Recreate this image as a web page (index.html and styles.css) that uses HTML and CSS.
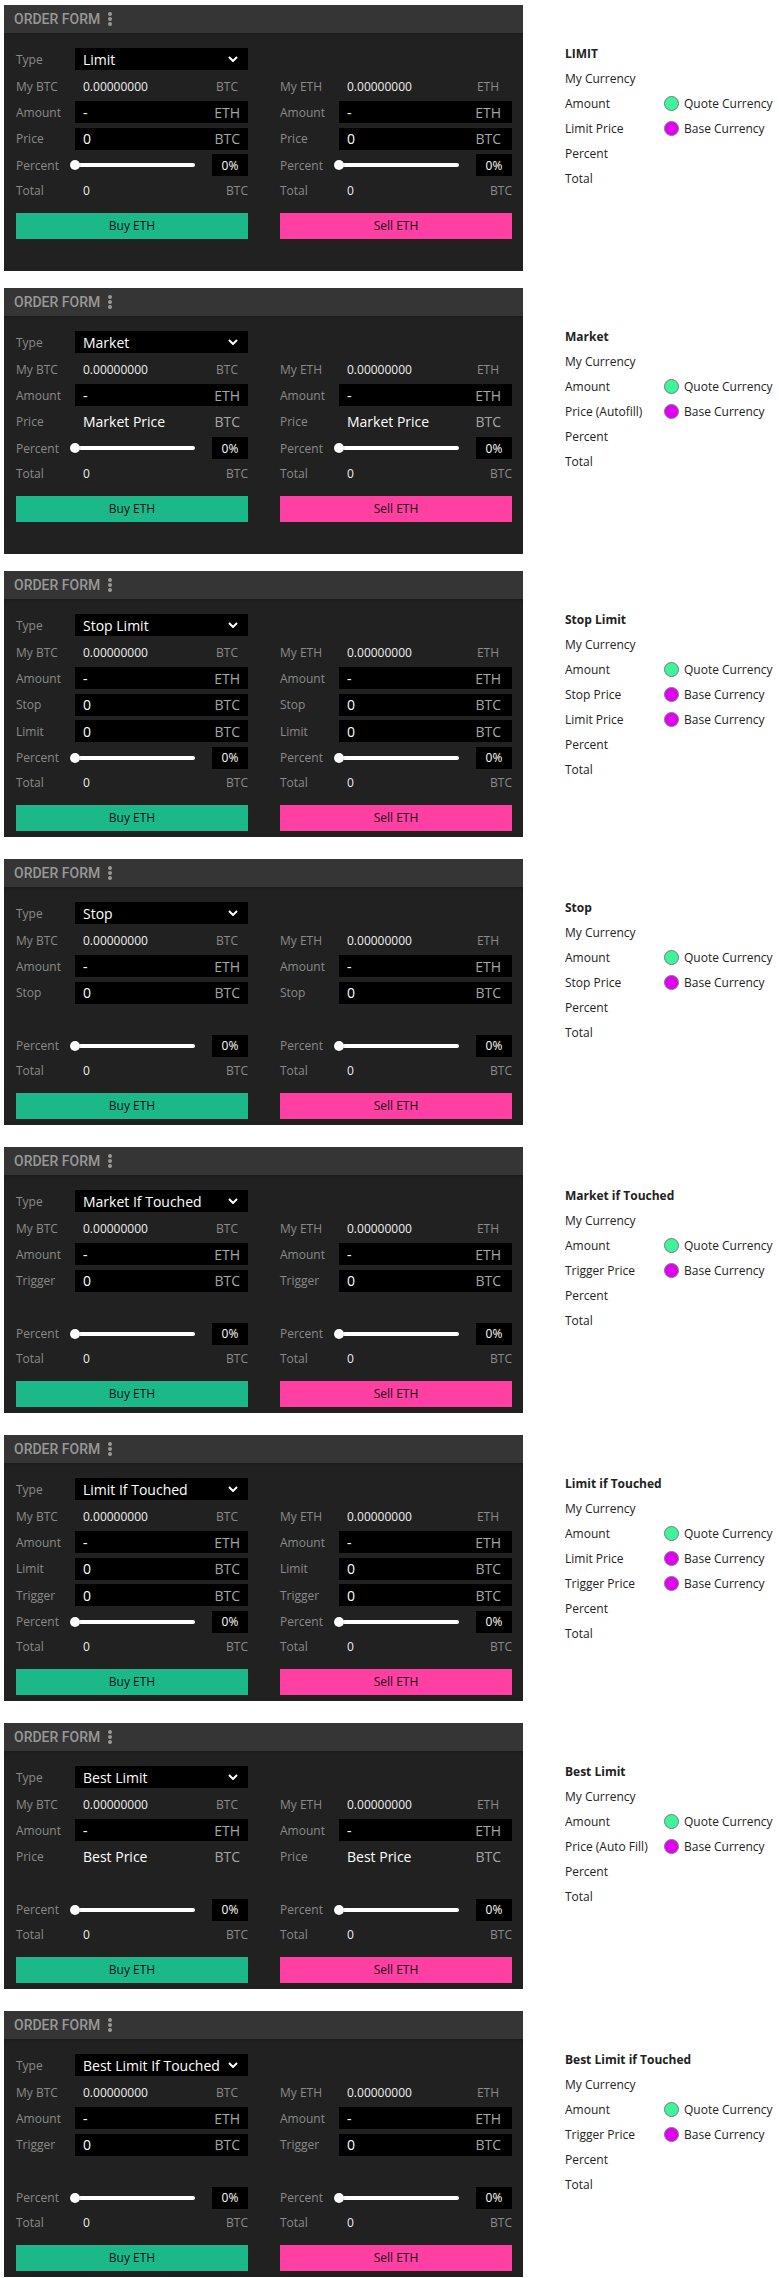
FILE: index.html
```html
<!DOCTYPE html>
<html>
  <head>
    <title>Order Types</title>
    <link rel="stylesheet" href="styles.css">
  </head>
  <body>

    <!-- Limit -->
    <section class="entry compact">
      <div class="order-form">
        <div class="of-head">
          <span class="of-title">ORDER FORM</span>
          <svg class="kebab" width="4" height="14" viewBox="0 0 4 14"><circle cx="2" cy="2" r="2"/><circle cx="2" cy="7" r="2"/><circle cx="2" cy="12" r="2"/></svg>
        </div>
        <div class="of-body">
          <div class="row type-row">
            <span class="lbl">Type</span>
            <div class="select">Limit<svg class="chev" width="10" height="6" viewBox="0 0 10 6"><polyline points="1,1 5,5 9,1"/></svg></div>
          </div>
          <div class="sides">
            <div class="side">
              <div class="row"><span class="lbl">My BTC</span><div class="val">0.00000000<span class="unit">BTC</span></div></div>
              <div class="row"><span class="lbl">Amount</span><div class="field">-<span class="unit">ETH</span></div></div>
              <div class="row"><span class="lbl">Price</span><div class="field">0<span class="unit">BTC</span></div></div>
              <div class="row"><span class="lbl">Percent</span><div class="pct"><div class="slider"><span class="thumb"></span></div><div class="pct-box">0%</div></div></div>
              <div class="row total-row"><span class="lbl">Total</span><div class="val total-val">0<span class="unit">BTC</span></div></div>
              <button class="btn buy">Buy ETH</button>
            </div>
            <div class="side ask">
              <div class="row"><span class="lbl">My ETH</span><div class="val">0.00000000<span class="unit">ETH</span></div></div>
              <div class="row"><span class="lbl">Amount</span><div class="field">-<span class="unit">ETH</span></div></div>
              <div class="row"><span class="lbl">Price</span><div class="field">0<span class="unit">BTC</span></div></div>
              <div class="row"><span class="lbl">Percent</span><div class="pct"><div class="slider"><span class="thumb"></span></div><div class="pct-box">0%</div></div></div>
              <div class="row total-row"><span class="lbl">Total</span><div class="val total-val">0<span class="unit">BTC</span></div></div>
              <button class="btn sell">Sell ETH</button>
            </div>
          </div>
        </div>
      </div>
      <div class="legend">
        <div class="lg-row lg-title">LIMIT</div>
        <div class="lg-row"><span class="lg-name">My Currency</span></div>
        <div class="lg-row"><span class="lg-name">Amount</span><span class="dot quote"></span>Quote Currency</div>
        <div class="lg-row"><span class="lg-name">Limit Price</span><span class="dot base"></span>Base Currency</div>
        <div class="lg-row"><span class="lg-name">Percent</span></div>
        <div class="lg-row"><span class="lg-name">Total</span></div>
      </div>
    </section>

    <!-- Market -->
    <section class="entry compact">
      <div class="order-form">
        <div class="of-head">
          <span class="of-title">ORDER FORM</span>
          <svg class="kebab" width="4" height="14" viewBox="0 0 4 14"><circle cx="2" cy="2" r="2"/><circle cx="2" cy="7" r="2"/><circle cx="2" cy="12" r="2"/></svg>
        </div>
        <div class="of-body">
          <div class="row type-row">
            <span class="lbl">Type</span>
            <div class="select">Market<svg class="chev" width="10" height="6" viewBox="0 0 10 6"><polyline points="1,1 5,5 9,1"/></svg></div>
          </div>
          <div class="sides">
            <div class="side">
              <div class="row"><span class="lbl">My BTC</span><div class="val">0.00000000<span class="unit">BTC</span></div></div>
              <div class="row"><span class="lbl">Amount</span><div class="field">-<span class="unit">ETH</span></div></div>
              <div class="row"><span class="lbl">Price</span><div class="plain">Market Price<span class="unit">BTC</span></div></div>
              <div class="row"><span class="lbl">Percent</span><div class="pct"><div class="slider"><span class="thumb"></span></div><div class="pct-box">0%</div></div></div>
              <div class="row total-row"><span class="lbl">Total</span><div class="val total-val">0<span class="unit">BTC</span></div></div>
              <button class="btn buy">Buy ETH</button>
            </div>
            <div class="side ask">
              <div class="row"><span class="lbl">My ETH</span><div class="val">0.00000000<span class="unit">ETH</span></div></div>
              <div class="row"><span class="lbl">Amount</span><div class="field">-<span class="unit">ETH</span></div></div>
              <div class="row"><span class="lbl">Price</span><div class="plain">Market Price<span class="unit">BTC</span></div></div>
              <div class="row"><span class="lbl">Percent</span><div class="pct"><div class="slider"><span class="thumb"></span></div><div class="pct-box">0%</div></div></div>
              <div class="row total-row"><span class="lbl">Total</span><div class="val total-val">0<span class="unit">BTC</span></div></div>
              <button class="btn sell">Sell ETH</button>
            </div>
          </div>
        </div>
      </div>
      <div class="legend">
        <div class="lg-row lg-title">Market</div>
        <div class="lg-row"><span class="lg-name">My Currency</span></div>
        <div class="lg-row"><span class="lg-name">Amount</span><span class="dot quote"></span>Quote Currency</div>
        <div class="lg-row"><span class="lg-name">Price (Autofill)</span><span class="dot base"></span>Base Currency</div>
        <div class="lg-row"><span class="lg-name">Percent</span></div>
        <div class="lg-row"><span class="lg-name">Total</span></div>
      </div>
    </section>

    <!-- Stop Limit -->
    <section class="entry">
      <div class="order-form">
        <div class="of-head">
          <span class="of-title">ORDER FORM</span>
          <svg class="kebab" width="4" height="14" viewBox="0 0 4 14"><circle cx="2" cy="2" r="2"/><circle cx="2" cy="7" r="2"/><circle cx="2" cy="12" r="2"/></svg>
        </div>
        <div class="of-body">
          <div class="row type-row">
            <span class="lbl">Type</span>
            <div class="select">Stop Limit<svg class="chev" width="10" height="6" viewBox="0 0 10 6"><polyline points="1,1 5,5 9,1"/></svg></div>
          </div>
          <div class="sides">
            <div class="side">
              <div class="row"><span class="lbl">My BTC</span><div class="val">0.00000000<span class="unit">BTC</span></div></div>
              <div class="row"><span class="lbl">Amount</span><div class="field">-<span class="unit">ETH</span></div></div>
              <div class="row"><span class="lbl">Stop</span><div class="field">0<span class="unit">BTC</span></div></div>
              <div class="row"><span class="lbl">Limit</span><div class="field">0<span class="unit">BTC</span></div></div>
              <div class="row"><span class="lbl">Percent</span><div class="pct"><div class="slider"><span class="thumb"></span></div><div class="pct-box">0%</div></div></div>
              <div class="row total-row"><span class="lbl">Total</span><div class="val total-val">0<span class="unit">BTC</span></div></div>
              <button class="btn buy">Buy ETH</button>
            </div>
            <div class="side ask">
              <div class="row"><span class="lbl">My ETH</span><div class="val">0.00000000<span class="unit">ETH</span></div></div>
              <div class="row"><span class="lbl">Amount</span><div class="field">-<span class="unit">ETH</span></div></div>
              <div class="row"><span class="lbl">Stop</span><div class="field">0<span class="unit">BTC</span></div></div>
              <div class="row"><span class="lbl">Limit</span><div class="field">0<span class="unit">BTC</span></div></div>
              <div class="row"><span class="lbl">Percent</span><div class="pct"><div class="slider"><span class="thumb"></span></div><div class="pct-box">0%</div></div></div>
              <div class="row total-row"><span class="lbl">Total</span><div class="val total-val">0<span class="unit">BTC</span></div></div>
              <button class="btn sell">Sell ETH</button>
            </div>
          </div>
        </div>
      </div>
      <div class="legend">
        <div class="lg-row lg-title">Stop Limit</div>
        <div class="lg-row"><span class="lg-name">My Currency</span></div>
        <div class="lg-row"><span class="lg-name">Amount</span><span class="dot quote"></span>Quote Currency</div>
        <div class="lg-row"><span class="lg-name">Stop Price</span><span class="dot base"></span>Base Currency</div>
        <div class="lg-row"><span class="lg-name">Limit Price</span><span class="dot base"></span>Base Currency</div>
        <div class="lg-row"><span class="lg-name">Percent</span></div>
        <div class="lg-row"><span class="lg-name">Total</span></div>
      </div>
    </section>

    <!-- Stop -->
    <section class="entry">
      <div class="order-form">
        <div class="of-head">
          <span class="of-title">ORDER FORM</span>
          <svg class="kebab" width="4" height="14" viewBox="0 0 4 14"><circle cx="2" cy="2" r="2"/><circle cx="2" cy="7" r="2"/><circle cx="2" cy="12" r="2"/></svg>
        </div>
        <div class="of-body">
          <div class="row type-row">
            <span class="lbl">Type</span>
            <div class="select">Stop<svg class="chev" width="10" height="6" viewBox="0 0 10 6"><polyline points="1,1 5,5 9,1"/></svg></div>
          </div>
          <div class="sides">
            <div class="side">
              <div class="row"><span class="lbl">My BTC</span><div class="val">0.00000000<span class="unit">BTC</span></div></div>
              <div class="row"><span class="lbl">Amount</span><div class="field">-<span class="unit">ETH</span></div></div>
              <div class="row"><span class="lbl">Stop</span><div class="field">0<span class="unit">BTC</span></div></div>
              <div class="row"></div>
              <div class="row"><span class="lbl">Percent</span><div class="pct"><div class="slider"><span class="thumb"></span></div><div class="pct-box">0%</div></div></div>
              <div class="row total-row"><span class="lbl">Total</span><div class="val total-val">0<span class="unit">BTC</span></div></div>
              <button class="btn buy">Buy ETH</button>
            </div>
            <div class="side ask">
              <div class="row"><span class="lbl">My ETH</span><div class="val">0.00000000<span class="unit">ETH</span></div></div>
              <div class="row"><span class="lbl">Amount</span><div class="field">-<span class="unit">ETH</span></div></div>
              <div class="row"><span class="lbl">Stop</span><div class="field">0<span class="unit">BTC</span></div></div>
              <div class="row"></div>
              <div class="row"><span class="lbl">Percent</span><div class="pct"><div class="slider"><span class="thumb"></span></div><div class="pct-box">0%</div></div></div>
              <div class="row total-row"><span class="lbl">Total</span><div class="val total-val">0<span class="unit">BTC</span></div></div>
              <button class="btn sell">Sell ETH</button>
            </div>
          </div>
        </div>
      </div>
      <div class="legend">
        <div class="lg-row lg-title">Stop</div>
        <div class="lg-row"><span class="lg-name">My Currency</span></div>
        <div class="lg-row"><span class="lg-name">Amount</span><span class="dot quote"></span>Quote Currency</div>
        <div class="lg-row"><span class="lg-name">Stop Price</span><span class="dot base"></span>Base Currency</div>
        <div class="lg-row"><span class="lg-name">Percent</span></div>
        <div class="lg-row"><span class="lg-name">Total</span></div>
      </div>
    </section>

    <!-- Market If Touched -->
    <section class="entry">
      <div class="order-form">
        <div class="of-head">
          <span class="of-title">ORDER FORM</span>
          <svg class="kebab" width="4" height="14" viewBox="0 0 4 14"><circle cx="2" cy="2" r="2"/><circle cx="2" cy="7" r="2"/><circle cx="2" cy="12" r="2"/></svg>
        </div>
        <div class="of-body">
          <div class="row type-row">
            <span class="lbl">Type</span>
            <div class="select">Market If Touched<svg class="chev" width="10" height="6" viewBox="0 0 10 6"><polyline points="1,1 5,5 9,1"/></svg></div>
          </div>
          <div class="sides">
            <div class="side">
              <div class="row"><span class="lbl">My BTC</span><div class="val">0.00000000<span class="unit">BTC</span></div></div>
              <div class="row"><span class="lbl">Amount</span><div class="field">-<span class="unit">ETH</span></div></div>
              <div class="row"><span class="lbl">Trigger</span><div class="field">0<span class="unit">BTC</span></div></div>
              <div class="row"></div>
              <div class="row"><span class="lbl">Percent</span><div class="pct"><div class="slider"><span class="thumb"></span></div><div class="pct-box">0%</div></div></div>
              <div class="row total-row"><span class="lbl">Total</span><div class="val total-val">0<span class="unit">BTC</span></div></div>
              <button class="btn buy">Buy ETH</button>
            </div>
            <div class="side ask">
              <div class="row"><span class="lbl">My ETH</span><div class="val">0.00000000<span class="unit">ETH</span></div></div>
              <div class="row"><span class="lbl">Amount</span><div class="field">-<span class="unit">ETH</span></div></div>
              <div class="row"><span class="lbl">Trigger</span><div class="field">0<span class="unit">BTC</span></div></div>
              <div class="row"></div>
              <div class="row"><span class="lbl">Percent</span><div class="pct"><div class="slider"><span class="thumb"></span></div><div class="pct-box">0%</div></div></div>
              <div class="row total-row"><span class="lbl">Total</span><div class="val total-val">0<span class="unit">BTC</span></div></div>
              <button class="btn sell">Sell ETH</button>
            </div>
          </div>
        </div>
      </div>
      <div class="legend">
        <div class="lg-row lg-title">Market if Touched</div>
        <div class="lg-row"><span class="lg-name">My Currency</span></div>
        <div class="lg-row"><span class="lg-name">Amount</span><span class="dot quote"></span>Quote Currency</div>
        <div class="lg-row"><span class="lg-name">Trigger Price</span><span class="dot base"></span>Base Currency</div>
        <div class="lg-row"><span class="lg-name">Percent</span></div>
        <div class="lg-row"><span class="lg-name">Total</span></div>
      </div>
    </section>

    <!-- Limit If Touched -->
    <section class="entry">
      <div class="order-form">
        <div class="of-head">
          <span class="of-title">ORDER FORM</span>
          <svg class="kebab" width="4" height="14" viewBox="0 0 4 14"><circle cx="2" cy="2" r="2"/><circle cx="2" cy="7" r="2"/><circle cx="2" cy="12" r="2"/></svg>
        </div>
        <div class="of-body">
          <div class="row type-row">
            <span class="lbl">Type</span>
            <div class="select">Limit If Touched<svg class="chev" width="10" height="6" viewBox="0 0 10 6"><polyline points="1,1 5,5 9,1"/></svg></div>
          </div>
          <div class="sides">
            <div class="side">
              <div class="row"><span class="lbl">My BTC</span><div class="val">0.00000000<span class="unit">BTC</span></div></div>
              <div class="row"><span class="lbl">Amount</span><div class="field">-<span class="unit">ETH</span></div></div>
              <div class="row"><span class="lbl">Limit</span><div class="field">0<span class="unit">BTC</span></div></div>
              <div class="row"><span class="lbl">Trigger</span><div class="field">0<span class="unit">BTC</span></div></div>
              <div class="row"><span class="lbl">Percent</span><div class="pct"><div class="slider"><span class="thumb"></span></div><div class="pct-box">0%</div></div></div>
              <div class="row total-row"><span class="lbl">Total</span><div class="val total-val">0<span class="unit">BTC</span></div></div>
              <button class="btn buy">Buy ETH</button>
            </div>
            <div class="side ask">
              <div class="row"><span class="lbl">My ETH</span><div class="val">0.00000000<span class="unit">ETH</span></div></div>
              <div class="row"><span class="lbl">Amount</span><div class="field">-<span class="unit">ETH</span></div></div>
              <div class="row"><span class="lbl">Limit</span><div class="field">0<span class="unit">BTC</span></div></div>
              <div class="row"><span class="lbl">Trigger</span><div class="field">0<span class="unit">BTC</span></div></div>
              <div class="row"><span class="lbl">Percent</span><div class="pct"><div class="slider"><span class="thumb"></span></div><div class="pct-box">0%</div></div></div>
              <div class="row total-row"><span class="lbl">Total</span><div class="val total-val">0<span class="unit">BTC</span></div></div>
              <button class="btn sell">Sell ETH</button>
            </div>
          </div>
        </div>
      </div>
      <div class="legend">
        <div class="lg-row lg-title">Limit if Touched</div>
        <div class="lg-row"><span class="lg-name">My Currency</span></div>
        <div class="lg-row"><span class="lg-name">Amount</span><span class="dot quote"></span>Quote Currency</div>
        <div class="lg-row"><span class="lg-name">Limit Price</span><span class="dot base"></span>Base Currency</div>
        <div class="lg-row"><span class="lg-name">Trigger Price</span><span class="dot base"></span>Base Currency</div>
        <div class="lg-row"><span class="lg-name">Percent</span></div>
        <div class="lg-row"><span class="lg-name">Total</span></div>
      </div>
    </section>

    <!-- Best Limit -->
    <section class="entry">
      <div class="order-form">
        <div class="of-head">
          <span class="of-title">ORDER FORM</span>
          <svg class="kebab" width="4" height="14" viewBox="0 0 4 14"><circle cx="2" cy="2" r="2"/><circle cx="2" cy="7" r="2"/><circle cx="2" cy="12" r="2"/></svg>
        </div>
        <div class="of-body">
          <div class="row type-row">
            <span class="lbl">Type</span>
            <div class="select">Best Limit<svg class="chev" width="10" height="6" viewBox="0 0 10 6"><polyline points="1,1 5,5 9,1"/></svg></div>
          </div>
          <div class="sides">
            <div class="side">
              <div class="row"><span class="lbl">My BTC</span><div class="val">0.00000000<span class="unit">BTC</span></div></div>
              <div class="row"><span class="lbl">Amount</span><div class="field">-<span class="unit">ETH</span></div></div>
              <div class="row"><span class="lbl">Price</span><div class="plain">Best Price<span class="unit">BTC</span></div></div>
              <div class="row"></div>
              <div class="row"><span class="lbl">Percent</span><div class="pct"><div class="slider"><span class="thumb"></span></div><div class="pct-box">0%</div></div></div>
              <div class="row total-row"><span class="lbl">Total</span><div class="val total-val">0<span class="unit">BTC</span></div></div>
              <button class="btn buy">Buy ETH</button>
            </div>
            <div class="side ask">
              <div class="row"><span class="lbl">My ETH</span><div class="val">0.00000000<span class="unit">ETH</span></div></div>
              <div class="row"><span class="lbl">Amount</span><div class="field">-<span class="unit">ETH</span></div></div>
              <div class="row"><span class="lbl">Price</span><div class="plain">Best Price<span class="unit">BTC</span></div></div>
              <div class="row"></div>
              <div class="row"><span class="lbl">Percent</span><div class="pct"><div class="slider"><span class="thumb"></span></div><div class="pct-box">0%</div></div></div>
              <div class="row total-row"><span class="lbl">Total</span><div class="val total-val">0<span class="unit">BTC</span></div></div>
              <button class="btn sell">Sell ETH</button>
            </div>
          </div>
        </div>
      </div>
      <div class="legend">
        <div class="lg-row lg-title">Best Limit</div>
        <div class="lg-row"><span class="lg-name">My Currency</span></div>
        <div class="lg-row"><span class="lg-name">Amount</span><span class="dot quote"></span>Quote Currency</div>
        <div class="lg-row"><span class="lg-name">Price (Auto Fill)</span><span class="dot base"></span>Base Currency</div>
        <div class="lg-row"><span class="lg-name">Percent</span></div>
        <div class="lg-row"><span class="lg-name">Total</span></div>
      </div>
    </section>

    <!-- Best Limit If Touched -->
    <section class="entry">
      <div class="order-form">
        <div class="of-head">
          <span class="of-title">ORDER FORM</span>
          <svg class="kebab" width="4" height="14" viewBox="0 0 4 14"><circle cx="2" cy="2" r="2"/><circle cx="2" cy="7" r="2"/><circle cx="2" cy="12" r="2"/></svg>
        </div>
        <div class="of-body">
          <div class="row type-row">
            <span class="lbl">Type</span>
            <div class="select">Best Limit If Touched<svg class="chev" width="10" height="6" viewBox="0 0 10 6"><polyline points="1,1 5,5 9,1"/></svg></div>
          </div>
          <div class="sides">
            <div class="side">
              <div class="row"><span class="lbl">My BTC</span><div class="val">0.00000000<span class="unit">BTC</span></div></div>
              <div class="row"><span class="lbl">Amount</span><div class="field">-<span class="unit">ETH</span></div></div>
              <div class="row"><span class="lbl">Trigger</span><div class="field">0<span class="unit">BTC</span></div></div>
              <div class="row"></div>
              <div class="row"><span class="lbl">Percent</span><div class="pct"><div class="slider"><span class="thumb"></span></div><div class="pct-box">0%</div></div></div>
              <div class="row total-row"><span class="lbl">Total</span><div class="val total-val">0<span class="unit">BTC</span></div></div>
              <button class="btn buy">Buy ETH</button>
            </div>
            <div class="side ask">
              <div class="row"><span class="lbl">My ETH</span><div class="val">0.00000000<span class="unit">ETH</span></div></div>
              <div class="row"><span class="lbl">Amount</span><div class="field">-<span class="unit">ETH</span></div></div>
              <div class="row"><span class="lbl">Trigger</span><div class="field">0<span class="unit">BTC</span></div></div>
              <div class="row"></div>
              <div class="row"><span class="lbl">Percent</span><div class="pct"><div class="slider"><span class="thumb"></span></div><div class="pct-box">0%</div></div></div>
              <div class="row total-row"><span class="lbl">Total</span><div class="val total-val">0<span class="unit">BTC</span></div></div>
              <button class="btn sell">Sell ETH</button>
            </div>
          </div>
        </div>
      </div>
      <div class="legend">
        <div class="lg-row lg-title">Best Limit if Touched</div>
        <div class="lg-row"><span class="lg-name">My Currency</span></div>
        <div class="lg-row"><span class="lg-name">Amount</span><span class="dot quote"></span>Quote Currency</div>
        <div class="lg-row"><span class="lg-name">Trigger Price</span><span class="dot base"></span>Base Currency</div>
        <div class="lg-row"><span class="lg-name">Percent</span></div>
        <div class="lg-row"><span class="lg-name">Total</span></div>
      </div>
    </section>

  </body>
</html>
```

FILE: styles.css
```css
body {
  margin: 0;
  padding: 5px 0 0 4px;
  background-color: #fff;
  font-family: 'Open Sans', 'Noto Sans', sans-serif;
}
.entry {
  display: flex;
  align-items: flex-start;
  margin-bottom: 22px;
}
.entry.compact {
  margin-bottom: 17px;
}

/* order form panel */
.order-form {
  flex-shrink: 0;
  width: 519px;
  height: 266px;
  background-color: #212121;
  overflow: hidden;
}
.of-head {
  position: relative;
  display: flex;
  align-items: center;
  height: 28px;
  padding-left: 10px;
  background-color: #353535;
  box-shadow: 0 0 4px rgba(0, 0, 0, 0.35);
}
.of-title {
  font-family: Roboto, sans-serif;
  font-weight: 500;
  font-size: 14px;
  color: #989898;
}
.kebab {
  margin-left: 8px;
  fill: #989898;
}
.of-body {
  padding: 15px 11px 0 12px;
}
.sides {
  display: grid;
  grid-template-columns: 232px 232px;
  column-gap: 32px;
}
.row {
  display: flex;
  align-items: center;
  height: 22px;
  margin-bottom: 4.4px;
}
.type-row {
  margin-bottom: 5px;
}
.total-row {
  height: 20px;
}
.lbl {
  width: 59px;
  font-size: 12px;
  color: #8a8a8a;
}
.select,
.val,
.field,
.plain,
.pct {
  box-sizing: border-box;
  display: flex;
  align-items: center;
  justify-content: space-between;
  width: 173px;
  height: 22px;
}
.select {
  padding: 0 10px 0 8px;
  background-color: #000;
  color: #fff;
  font-size: 14px;
}
.chev {
  fill: none;
  stroke: #fff;
  stroke-width: 2;
}
.val {
  padding: 0 10px 0 8px;
  color: #eee;
  font-size: 12px;
}
.field {
  padding: 0 8px;
  background-color: #000;
  color: #fff;
  font-size: 14px;
}
.plain {
  padding: 0 8px;
  color: #fff;
  font-size: 14px;
}
.ask .val {
  padding-right: 13px;
}
.ask .field,
.ask .plain {
  padding-right: 11px;
}
.val.total-val {
  height: 20px;
  padding-right: 0;
}
.unit {
  color: #8a8a8a;
}
.field .unit,
.plain .unit {
  color: #a6a6a6;
}

/* percent slider */
.pct {
  justify-content: flex-start;
}
.slider {
  position: relative;
  width: 120px;
  height: 4px;
  margin-right: 17px;
  border-radius: 2px;
  background-color: #fff;
}
.thumb {
  position: absolute;
  left: -5px;
  top: -3px;
  width: 10px;
  height: 10px;
  border-radius: 50%;
  background-color: #fff;
  box-shadow: 0 0 1px rgba(0, 0, 0, 0.6);
}
.pct-box {
  display: flex;
  align-items: center;
  justify-content: center;
  width: 36px;
  height: 22px;
  background-color: #000;
  color: #fff;
  font-size: 12px;
}
.btn {
  display: block;
  width: 232px;
  height: 26px;
  margin-top: 12px;
  padding: 0;
  border: 0;
  font-family: inherit;
  font-size: 12px;
  color: #111;
}
.buy {
  background-color: #1bb88a;
}
.sell {
  background-color: #ff3fa1;
}

/* legend beside each form */
.legend {
  margin: 36px 0 0 42px;
  font-size: 12px;
  color: #222;
}
.lg-row {
  display: flex;
  align-items: center;
  height: 25px;
}
.lg-title {
  font-weight: 700;
}
.lg-name {
  width: 99px;
}
.dot {
  width: 13px;
  height: 13px;
  margin-right: 5px;
  border: 1px solid #7a7a7a;
  border-radius: 50%;
}
.quote {
  background-color: #3ff59c;
}
.base {
  background-color: #e100f5;
}
```
